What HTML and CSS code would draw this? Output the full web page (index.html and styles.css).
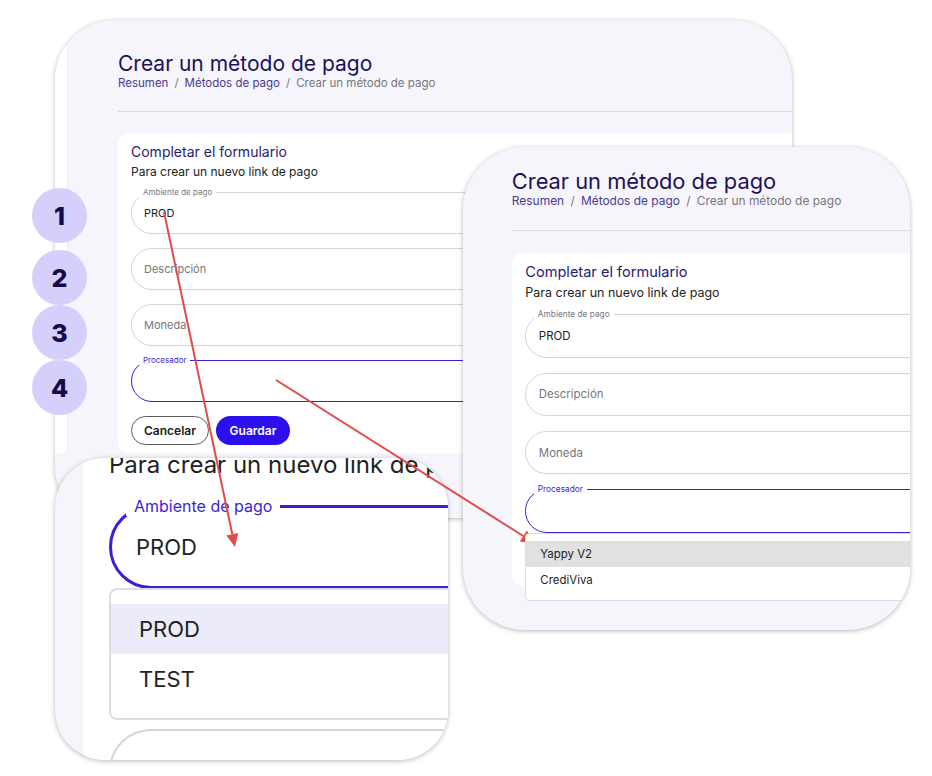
FILE: index.html
```html
<!DOCTYPE html>
<html lang="es">
<head>
  <meta charset="UTF-8">
  <meta name="viewport" content="width=device-width, initial-scale=1">
  <title>Crear un método de pago</title>
  <link rel="stylesheet" href="styles.css">
</head>
<body>
  <div class="canvas">

    <!-- Back window: the full form -->
    <div class="window win-a">
      <div class="screen">
        <div class="sidebar"></div>
        <div class="main">
          <h1 class="page-title">Crear un método de pago</h1>
          <div class="crumbs">
            <span class="crumb-link">Resumen</span><span class="crumb-sep">/</span><span class="crumb-link">Métodos de pago</span><span class="crumb-sep">/</span><span class="crumb-current">Crear un método de pago</span>
          </div>
          <div class="divider"></div>
          <div class="card">
            <div class="card-title">Completar el formulario</div>
            <div class="card-sub">Para crear un nuevo link de pago</div>
            <div class="field first">
              <span class="field-label">Ambiente de pago</span>PROD
            </div>
            <div class="field"><span class="placeholder">Descripción</span></div>
            <div class="field"><span class="placeholder">Moneda</span></div>
            <div class="field focus">
              <span class="field-label">Procesador</span>
            </div>
            <div class="actions">
              <button class="btn btn-outline">Cancelar</button>
              <button class="btn btn-primary">Guardar</button>
            </div>
          </div>
        </div>
      </div>
    </div>

    <!-- Right window: processor dropdown open -->
    <div class="window win-b">
      <div class="screen screen-b">
        <div class="sidebar"></div>
        <div class="main">
          <h1 class="page-title">Crear un método de pago</h1>
          <div class="crumbs">
            <span class="crumb-link">Resumen</span><span class="crumb-sep">/</span><span class="crumb-link">Métodos de pago</span><span class="crumb-sep">/</span><span class="crumb-current">Crear un método de pago</span>
          </div>
          <div class="divider"></div>
          <div class="card">
            <div class="card-title">Completar el formulario</div>
            <div class="card-sub">Para crear un nuevo link de pago</div>
            <div class="field first">
              <span class="field-label">Ambiente de pago</span>PROD
            </div>
            <div class="field"><span class="placeholder">Descripción</span></div>
            <div class="field"><span class="placeholder">Moneda</span></div>
            <div class="field focus">
              <span class="field-label">Procesador</span>
              <div class="menu">
                <div class="menu-item active-gray">Yappy V2</div>
                <div class="menu-item">CrediViva</div>
              </div>
            </div>
            <div class="actions">
              <button class="btn btn-outline">Cancelar</button>
              <button class="btn btn-primary">Guardar</button>
            </div>
          </div>
        </div>
      </div>
    </div>

    <!-- Bottom window: zoomed environment dropdown -->
    <div class="window win-c">
      <div class="screen screen-c">
        <div class="sidebar"></div>
        <div class="main">
          <h1 class="page-title">Crear un método de pago</h1>
          <div class="crumbs">
            <span class="crumb-link">Resumen</span><span class="crumb-sep">/</span><span class="crumb-link">Métodos de pago</span><span class="crumb-sep">/</span><span class="crumb-current">Crear un método de pago</span>
          </div>
          <div class="divider"></div>
          <div class="card">
            <div class="card-title">Completar el formulario</div>
            <div class="card-sub">Para crear un nuevo link de pago</div>
            <div class="field first focus">
              <span class="field-label">Ambiente de pago</span>PROD
              <div class="menu">
                <div class="menu-item active-lav">PROD</div>
                <div class="menu-item">TEST</div>
              </div>
            </div>
            <div class="field"><span class="placeholder">Descripción</span></div>
            <div class="field"><span class="placeholder">Moneda</span></div>
          </div>
        </div>
      </div>
    </div>

    <div class="steps">
      <div class="step step-first">1</div>
      <div class="step">2</div>
      <div class="step">3</div>
      <div class="step">4</div>
    </div>

    <svg class="arrows" width="932" height="776" viewBox="0 0 932 776">
      <line x1="164" y1="212" x2="232.3" y2="534.3" stroke="#e04b4b" stroke-width="2"/>
      <polygon points="235,547 226.4,535.5 238.2,533" fill="#e04b4b"/>
      <line x1="276" y1="380" x2="523.3" y2="536" stroke="#e04b4b" stroke-width="2"/>
      <polygon points="536,544 519.8,541.5 526.8,530.5" fill="#e04b4b"/>
    </svg>

  </div>
</body>
</html>
```

FILE: styles.css
```css
body {
  margin: 0;
  background: #fff;
  font-family: Inter, "Noto Sans", sans-serif;
}

.canvas {
  position: relative;
  width: 932px;
  height: 776px;
  overflow: hidden;
}

/* Screenshot windows */
.window {
  position: absolute;
  overflow: hidden;
  background: #f6f5fb;
  box-shadow: 0 1px 5px rgba(0, 0, 0, 0.28);
}

.win-a {
  left: 55px;
  top: 20px;
  width: 737px;
  height: 498px;
  border-radius: 60px 60px 50px 50px;
}

.win-b {
  left: 463px;
  top: 147px;
  width: 447px;
  height: 483px;
  border-radius: 62px;
}

.win-c {
  left: 55px;
  top: 458px;
  width: 393px;
  height: 302px;
  border-radius: 50px;
}

.screen {
  display: flex;
  width: 900px;
}

.screen-b {
  zoom: 1.04;
  margin: -11px 0 0 -16px;
}

.screen-c {
  zoom: 2;
  margin: -148.5px 0 0 -49px;
}

.sidebar {
  flex: none;
  width: 12px;
  background: #fff;
  border-right: 1px solid #ebebf1;
}

.main {
  flex: 1;
  padding: 31px 0 0 50px;
}

.page-title {
  margin: 0;
  font-size: 21px;
  line-height: 25px;
  font-weight: 400;
  color: #1c1259;
}

.crumbs {
  font-size: 11.5px;
  line-height: 14px;
  color: #77767f;
}

.crumb-link {
  color: #4a3a92;
}

.crumb-sep {
  margin: 0 6px;
}

.divider {
  height: 1px;
  background: #dcdce4;
  margin: 21px 0;
}

.card {
  background: #fff;
  border-radius: 10px 0 0 10px;
  padding: 10px 0 8px 13px;
}

.card-title {
  font-size: 14px;
  line-height: 18px;
  color: #2a1b6e;
}

.card-sub {
  margin-top: 3px;
  font-size: 12px;
  line-height: 16px;
  color: #222;
}

/* Outlined pill fields */
.field {
  position: relative;
  display: flex;
  align-items: center;
  box-sizing: border-box;
  height: 42px;
  margin-top: 14px;
  padding-left: 12px;
  border: 1px solid #d4d4da;
  border-radius: 21px 0 0 21px;
  font-size: 11px;
  color: #222;
}

.field.first {
  margin-top: 12px;
}

.field.focus {
  border: 1.5px solid #3a1fd9;
}

.field-label {
  position: absolute;
  top: -6px;
  left: 7px;
  padding: 0 4px;
  background: #fff;
  font-size: 8px;
  line-height: 10px;
  color: #77767f;
}

.field.focus .field-label {
  color: #3a1fd9;
}

.placeholder {
  color: #76757c;
}

.menu {
  position: absolute;
  left: -1.5px;
  right: 0;
  top: calc(100% + 1px);
  z-index: 2;
  padding: 7px 0;
  background: #fff;
  border: 1px solid #dcdce2;
  border-radius: 4px;
}

.menu-item {
  height: 25px;
  line-height: 25px;
  padding-left: 14px;
  font-size: 11px;
  color: #222;
}

.menu-item.active-gray {
  background: #e1e1e1;
}

.menu-item.active-lav {
  background: #ecebfa;
}

.actions {
  display: flex;
  gap: 7px;
  margin-top: 14px;
}

.btn {
  height: 29px;
  border-radius: 15px;
  font-family: inherit;
  font-size: 12px;
  font-weight: 600;
}

.btn-outline {
  width: 78px;
  background: #fff;
  border: 1px solid #5c5c5c;
  color: #222;
}

.btn-primary {
  width: 74px;
  background: #2c0fef;
  border: none;
  color: #fff;
}

/* Step numbers */
.steps {
  position: absolute;
  left: 32px;
  top: 188px;
  display: flex;
  flex-direction: column;
}

.step {
  display: flex;
  align-items: center;
  justify-content: center;
  width: 55px;
  height: 55px;
  border-radius: 50%;
  background: #d5cffb;
  font-size: 25px;
  font-weight: 800;
  color: #17094f;
}

.step-first {
  margin-bottom: 7px;
}

.arrows {
  position: absolute;
  left: 0;
  top: 0;
}
```
